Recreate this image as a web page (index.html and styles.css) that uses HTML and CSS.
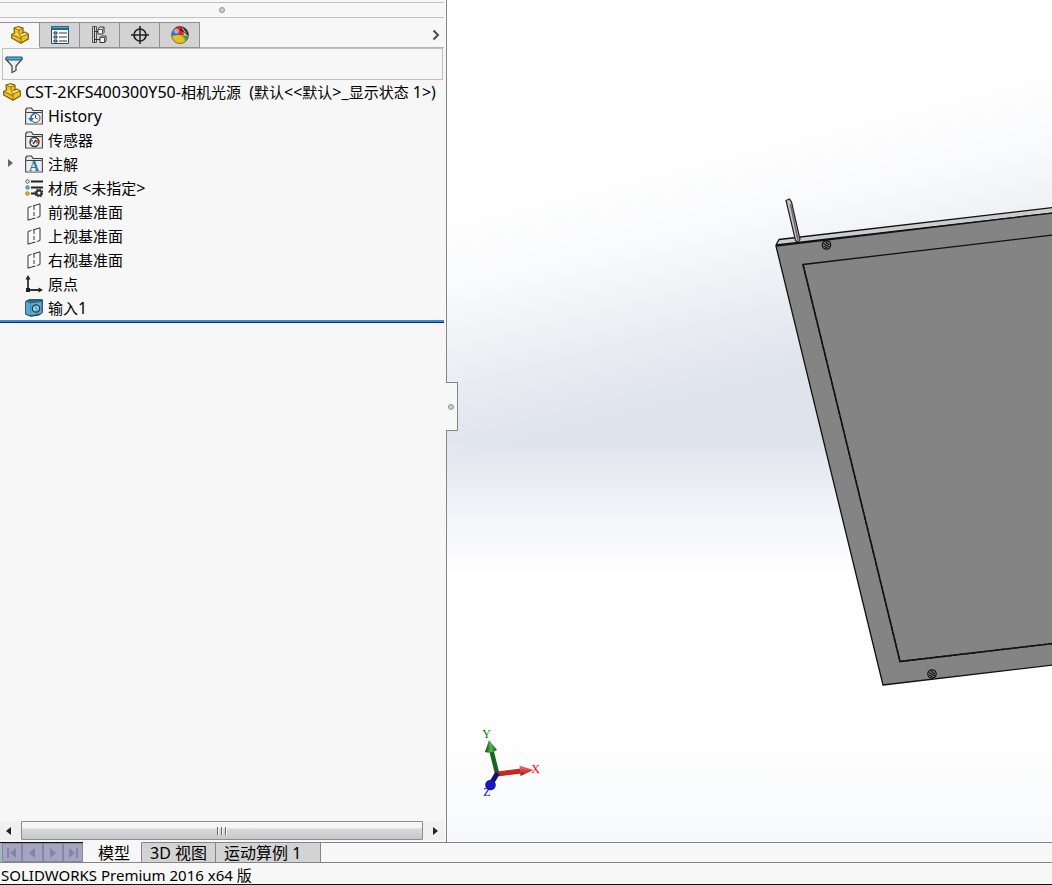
FILE: index.html
```html
<!DOCTYPE html>
<html lang="zh-CN">
<head>
<meta charset="utf-8">
<title>SOLIDWORKS Premium 2016</title>
<link rel="stylesheet" href="styles.css">
</head>
<body>
<svg class="defs" aria-hidden="true">
  <symbol id="part" viewBox="0 0 18 18">
    <path d="M3 2 7 .700 12 2v4.700L14 6l3.300 2v5L10 17.300.700 12V8.500L3.500 7z" fill="#f2c224" stroke="#7d5a08" stroke-width="1.200" stroke-linejoin="round"/>
    <path d="M3.800 2.300 7 1.400l4 1-3 1.300zM1.500 8.700l2.300-1 6 3.300 6.500-3-2-1.200-3 1.400-3-1.400-3 1z" fill="#ffe783"/>
    <path d="M3.500 2.300 8 4v4M8 4l4-1.800M12 6.700 8 8.500l2 2.500 7-3M10 11v6M.700 8.500 10 13" fill="none" stroke="#8a650c" stroke-width=".9"/>
  </symbol>
  <symbol id="folder" viewBox="0 0 18 18">
    <path d="M.7 17V2.500L2 1h4.500L8 3.500h9.300V17z" fill="#e4e6e8" stroke="#404040" stroke-width="1.200"/>
    <path d="M1.300 5.500h15.400" stroke="#404040"/>
    <path d="M1.500 6.300h15v10h-15z" fill="#eceeef"/>
  </symbol>
  <symbol id="plane" viewBox="0 0 18 18">
    <path d="M3 4.500 15 .8v12.700L3 17.200z" fill="#fafafa" stroke="#333"/>
    <path d="M9 3v13" stroke="#333" stroke-dasharray="4 2"/>
    <path d="M6.500 3.400 8 3M10.500 14.900l1.500-.4" stroke="#f7f7f7" stroke-width="2"/>
  </symbol>
</svg>

<main class="workspace">
  <aside class="panel">
    <div class="grip"><span class="dot"></span></div>
    <nav class="tool-tabs" aria-label="管理器">
      <button class="tool is-active" aria-label="特征设计树"><svg class="icon"><use href="#part"/></svg></button>
      <button class="tool" aria-label="属性"><svg class="icon" viewBox="0 0 18 18">
        <path d="M.5.500h17v17H.5z" fill="#fff" stroke="#244b63"/><path d="M0 0h18v4H0z" fill="#26658a"/><path d="M1 1h16v1H1z" fill="#5da7ce"/>
        <path d="M3 6h3v2H3zm0 4h3v2H3zm0 4h3v2H3z" fill="#8cc7e4" stroke="#263f50"/><path d="M8 7h8M8 11h8M8 15h8" stroke="#333"/></svg></button>
      <button class="tool" aria-label="配置"><svg class="icon" viewBox="0 0 18 18">
        <path d="M1.500.500h4v16h-4z" fill="#d9d9d9" stroke="#555"/><path d="M3.500 1v16M4 5.500h4M4 13.500h6" fill="none" stroke="#333"/>
        <path d="M7 3.500 8.500 1H13v5.500L11.500 8H7zM9 11.500l1.500-1.500H15v5l-1.500 1.500H9z" fill="#f1f1f1" stroke="#333"/><path d="M7 3.500h4.500V8m0-4.500L13 1M9 11.500h4.500v5m0-5L15 10" fill="none" stroke="#555"/></svg></button>
      <button class="tool" aria-label="尺寸专家"><svg class="icon" viewBox="0 0 18 18">
        <circle cx="9" cy="9" r="6" fill="none" stroke="#222" stroke-width="1.700"/><path d="M9 0v18M0 9h18" stroke="#222" stroke-width="1.500"/></svg></button>
      <button class="tool" aria-label="外观"><svg class="icon" viewBox="0 0 18 18">
        <path d="M9 9 1 10A8.500 8.500 0 0 1 9 .5z" fill="#2d6fcb"/><path d="M9 10 3.500 2.500Q7-.5 11 .7L13 9z" fill="#e22424"/><path d="M11 .7a8.500 8.500 0 0 1 6.500 9L9 4z" fill="#282020"/><path d="M.6 10 9 9.500 8.500 17.400A8.500 8.500 0 0 1 .6 10z" fill="#e8c40c"/><path d="M8.500 17.500 9 9.500h8.400a8.500 8.500 0 0 1-8.900 8z" fill="#dcc51a"/><path d="M11 9.500h6.500Q17 13 15 15z" fill="#46a03c"/>
        <path d="m11 2 4 5" stroke="#bf8b80" stroke-width="1.500"/><circle cx="5.500" cy="5" r="2.500" fill="#fff" opacity=".5"/><circle cx="9" cy="9" r="8.500" fill="none" stroke="#4d4038" stroke-width=".7"/></svg></button>
      <button class="more" aria-label="更多"><svg width="8" height="12" viewBox="0 0 8 12"><path d="m1.500 1.500 4.500 4.500-4.500 4.500" fill="none" stroke="#4c4c4c" stroke-width="2"/></svg></button>
    </nav>
    <label class="filter">
      <svg class="icon" viewBox="0 0 18 18"><path d="M.8 3 7 10v6.500l4-2V10l6.200-7z" fill="#eee" stroke="#404040" stroke-width="1.200"/><path d="M1 1h16v3H1z" fill="#4cb2df" stroke="#24536d"/></svg>
      <input type="text" aria-label="过滤器">
    </label>
    <ul class="tree">
      <li class="root"><svg class="icon"><use href="#part"/></svg><span><span class="latin">CST-2KFS400300Y50-</span>相机光源<span class="latin">&nbsp; (</span>默认<span class="latin">&lt;&lt;</span>默认<span class="latin">&gt;_</span>显示状态<span class="latin"> 1&gt;)</span></span></li>
      <li><svg class="icon" viewBox="0 0 18 18"><use href="#folder"/><circle cx="10.500" cy="11" r="4.500" fill="#fff" stroke="#444"/><path d="M10.500 8v3l2 1" fill="none" stroke="#444"/><path d="M3 11h6l-3 4z" fill="#267ca7"/><path d="M6.200 12a4.400 4.400 0 0 1 4-5.500" fill="none" stroke="#267ca7" stroke-width="1.600"/></svg><span class="latin">History</span></li>
      <li><svg class="icon" viewBox="0 0 18 18"><use href="#folder"/><circle cx="9.500" cy="11" r="4.500" fill="#fff" stroke="#333" stroke-width="1.400"/><path d="m8 13 3-4" stroke="#333" stroke-width="1.400"/><path d="M11 9h2v3.500h-2z" fill="#dc5338"/><path d="M6 10h2" stroke="#36a2bd" stroke-width="2"/></svg>传感器</li>
      <li><button class="expander" aria-label="展开"></button><svg class="icon" viewBox="0 0 18 18"><use href="#folder"/><text class="note-letter" x="9" y="16" text-anchor="middle">A</text></svg>注解</li>
      <li><svg class="icon" viewBox="0 0 18 18"><path d="M6 2.500h12M6 8.500h12M6 14.500h5" stroke="#222" stroke-width="2"/><circle cx="2.500" cy="2.500" r="1.700" fill="#fff" stroke="#555"/><circle cx="2.500" cy="8.500" r="1.700" fill="#62c0e7" stroke="#287397"/><circle cx="2.500" cy="14.500" r="1.700" fill="#f4c822" stroke="#8f710f"/><circle cx="14" cy="14" r="2.500" fill="none" stroke="#333" stroke-width="2"/><circle cx="14" cy="14" r="3.700" fill="none" stroke="#333" stroke-width="1.500" stroke-dasharray="1.500 1.400"/></svg><span>材质<span class="latin"> &lt;</span>未指定<span class="latin">&gt;</span></span></li>
      <li><svg class="icon"><use href="#plane"/></svg>前视基准面</li>
      <li><svg class="icon"><use href="#plane"/></svg>上视基准面</li>
      <li><svg class="icon"><use href="#plane"/></svg>右视基准面</li>
      <li><svg class="icon" viewBox="0 0 18 18"><path d="M3 3v12h12" fill="none" stroke="#333" stroke-width="1.800"/><path d="M3 0 5.500 4.500h-5zM18 15l-4.500 2.500v-5zM1 13h4v4H1z" fill="#222"/></svg>原点</li>
      <li><svg class="icon" viewBox="0 0 18 18"><path d="M.7 2.500 4 .7h13.300v13L14 16l-8 1.300-5.300-2z" fill="#286d92" stroke="#163e55"/><path d="M1 2.700 5 4v12.500l-4-1.700z" fill="#58a9cb"/><path d="M5.500 4.500 16.500 3v11l-11 2.300z" fill="#68acc9"/><circle cx="11" cy="9.500" r="3.700" fill="#9dd1e4" stroke="#143d56" stroke-width="1.300"/><path d="M9.500 7.500q3 1 2.500 4.500" fill="none" stroke="#35718e"/></svg><span>输入<span class="latin">1</span></span></li>
    </ul>
    <div class="scrollbar">
      <button class="arrow left" aria-label="向左滚动"></button>
      <div class="thumb"><i></i><i></i><i></i></div>
      <button class="arrow right" aria-label="向右滚动"></button>
    </div>
    <button class="splitter" aria-label="折叠面板"><span class="dot"></span></button>
  </aside>

  <section class="viewport" aria-label="图形区域">
    <svg class="scene" viewBox="447 0 605 842" preserveAspectRatio="xMinYMin slice">
      <defs>
        <linearGradient id="red" x2="0" y2="1"><stop stop-color="#ff7770"/><stop offset="1" stop-color="#a50b0b"/></linearGradient>
        <linearGradient id="green"><stop stop-color="#0c450c"/><stop offset=".5" stop-color="#56b956"/><stop offset="1" stop-color="#0c500c"/></linearGradient>
      </defs>
      <g stroke="#111" stroke-width="1.300" stroke-linejoin="round">
        <path d="M776 245 779 239.500 1053 207.500V213z" fill="#ccc"/>
        <path d="M776 246 1053 213V665L883 685z" fill="#848484"/>
        <path d="M1053 235 803 264.500 900 661.500 1053 643.500" fill="#848484"/>
        <path d="m803 264.500 97 397 153-18" fill="none" stroke-width="1.600" stroke-dasharray="5 1"/>
      </g>
      <path d="M786 200.500 789.500 199 791.500 202 800 239.500Q798 243 795.500 240.500z" fill="#c4bfc5" stroke="#222" stroke-width="1.200"/>
      <path d="m790.500 204 7.500 36" stroke="#75607a" stroke-width="1.500"/>
      <g fill="#888" stroke="#111" stroke-width="1.200">
        <circle cx="826.500" cy="245" r="4.200"/><path d="m823.500 243.500 6 3.500m-4-5 4 3m-6 1 4 2"/>
        <circle cx="932" cy="674" r="4.200"/><path d="m929 672.500 6 3.500m-4-5 4 3m-6 1 4 2"/>
      </g>
      <path d="M497 773 491.500 751" stroke="#17651b" stroke-width="4.500"/>
      <path d="m489 740-4 12q6 2 12-2z" fill="url(#green)"/>
      <path d="m497 772 24-3 .5 4-24.500 3z" fill="#d42222" stroke="#9d1717" stroke-width=".8"/>
      <path d="m519.500 765.500 14 4.500-13 6z" fill="url(#red)"/>
      <path d="m497.500 773-6 10" stroke="#111174" stroke-width="5"/>
      <circle cx="490.500" cy="785" r="5.300" fill="#1919b5"/>
      <g class="axis-label" text-anchor="middle"><text x="486.500" y="738" fill="#008000">Y</text><text x="535.500" y="773" fill="#f00">X</text><text x="487" y="796" fill="#00f">Z</text></g>
    </svg>
  </section>
</main>

<nav class="sheet-tabs" aria-label="视图">
  <div class="sheet-nav">
    <button aria-label="第一个"><svg viewBox="0 0 12 12"><path d="M1 1h2v10H1zM10 1v10L4 6z"/></svg></button>
    <button aria-label="上一个"><svg viewBox="0 0 12 12"><path d="M9 1v10L3 6z"/></svg></button>
    <button aria-label="下一个"><svg viewBox="0 0 12 12"><path d="M3 1v10l6-5z"/></svg></button>
    <button aria-label="最后一个"><svg viewBox="0 0 12 12"><path d="M2 1v10l6-5zM9 1h2v10H9z"/></svg></button>
  </div>
  <button class="sheet is-active">模型</button>
  <button class="sheet">3D 视图</button>
  <button class="sheet wide">运动算例 1</button>
  <span class="sheet-rest"></span>
</nav>
<footer class="status">SOLIDWORKS Premium 2016 x64 版</footer>
</body>
</html>
```
FILE: styles.css
```css
* { box-sizing: border-box; }

body {
  margin: 0;
  min-height: 100vh;
  display: flex;
  flex-direction: column;
  background: #f7f7f7;
  color: #000;
  font: 15px/24px "Noto Sans", "Noto Sans CJK SC", sans-serif;
}

button {
  margin: 0;
  padding: 0;
  border: 0;
  background: none;
  color: inherit;
  font: inherit;
}

.defs { position: absolute; width: 0; height: 0; }
.icon { width: 18px; height: 18px; flex: none; display: block; }
.latin { font-size: 16px; white-space: pre; }

.workspace {
  flex: 1;
  display: grid;
  grid-template-columns: 446px minmax(0, 1fr);
}

.panel {
  position: relative;
  display: flex;
  flex-direction: column;
  padding-top: 2px;
}

.grip {
  height: 16px;
  margin-right: 2px;
  display: flex;
  align-items: center;
  justify-content: center;
  border-top: 1px solid #c0c0c0;
  border-bottom: 1px solid #c0c0c0;
}

.dot {
  width: 6px;
  height: 6px;
  border: 1px solid #929292;
  border-radius: 50%;
  background: #cfcfcf;
}

.tool-tabs {
  display: flex;
  height: 26px;
  margin: 4px 2px 0 0;
}

.tool {
  width: 40px;
  display: flex;
  align-items: center;
  justify-content: center;
  border: 1px solid #909090;
  border-left: 0;
  background: #d3d3d3;
}

.tool.is-active { background: #f7f7f7; border-bottom-color: #f7f7f7; }

.more {
  flex: 1;
  display: flex;
  align-items: center;
  justify-content: flex-end;
  padding-right: 4px;
  border-bottom: 1px solid #b5b5b5;
}

.filter {
  display: flex;
  align-items: center;
  height: 32px;
  margin: 0 1px 0 2px;
  padding: 2px 0 0 2px;
  border: 1px solid #c0c0c0;
  margin-right: 3px;
}

.filter input {
  flex: 1;
  min-width: 0;
  border: 0;
  outline: 0;
  background: none;
  font: inherit;
}

.tree {
  margin: 0 2px 0 0;
  padding: 0 0 2px;
  list-style: none;
  border-bottom: 1px solid #1b1b9c;
  box-shadow: inset 0 -2px #3a8cc8;
}

.tree li {
  position: relative;
  display: flex;
  align-items: center;
  gap: 5px;
  height: 24px;
  padding-left: 25px;
  white-space: nowrap;
}

.tree .root { padding-left: 3px; gap: 4px; }
.note-letter { font: bold 14px "Liberation Serif", serif; fill: #287b9e; }

.expander {
  position: absolute;
  left: 8px;
  top: 7px;
  border: 4px solid transparent;
  border-left: 5px solid #666;
  border-right: 0;
}

.scrollbar {
  display: flex;
  height: 19px;
  margin: auto 2px 2px 0;
  background: #f0f0f0;
}

.arrow {
  width: 21px;
  padding-right: 4px;
  display: flex;
  align-items: center;
  justify-content: center;
}

.arrow.right { padding: 0 0 0 4px; }
.arrow::before { content: ""; border: 4px solid transparent; }
.arrow.left::before { border-right: 5px solid #222; border-left: 0; }
.arrow.right::before { border-left: 5px solid #222; border-right: 0; }

.thumb {
  flex: 1;
  display: flex;
  align-items: center;
  justify-content: center;
  gap: 2px;
  border: 1px solid #8c8c8c;
  border-radius: 1px;
  background: linear-gradient(#f5f5f5 0 35%, #dadadc 40%, #c6c6cc);
}

.thumb i { width: 2px; height: 8px; background: linear-gradient(90deg, #666 50%, #fff 50%); }

.splitter {
  position: absolute;
  z-index: 1;
  left: 446px;
  top: 382px;
  width: 12px;
  height: 49px;
  display: flex;
  align-items: center;
  justify-content: center;
  padding-right: 2px;
  border: 1px solid #858585;
  border-left: 0;
  background: #f7f7f7;
}

.viewport {
  position: relative;
  overflow: hidden;
  border-left: 1px solid #858585;
  background:
    linear-gradient(166deg, #fff 190px, rgba(255, 255, 255, 0.85) 280px, rgba(255, 255, 255, 0.3) 380px, rgba(255, 255, 255, 0) 450px),
    linear-gradient(#dfe3ec 440px, #f4f5f9 515px, #fff 580px, #fff 720px, #f8f9fb);
}

.scene { position: absolute; inset: 0; width: 100%; height: 100%; }
.axis-label { font: 12px "Liberation Serif", serif; }

.sheet-tabs { display: flex; height: 20px; font-size: 16px; line-height: 20px; }

.sheet-nav {
  display: flex;
  width: 83px;
  padding-left: 2px;
  border-top: 1px solid #111;
  background: #a4b8ba;
}

.sheet-nav button {
  flex: 1;
  display: flex;
  align-items: center;
  justify-content: center;
  border: 1px solid #8787a5;
  background: #a5a5bf;
}

.sheet-nav svg { width: 12px; height: 12px; fill: #8585a3; }

.sheet {
  padding: 0 8px;
  border-top: 1px solid #858585;
  border-right: 1px solid #858585;
  background: #d3d3d3;
  line-height: 18px;
  white-space: nowrap;
}

.sheet.is-active { padding: 0 11px 0 15px; border-top-color: #f7f7f7; background: #f7f7f7; }
.sheet.wide { padding-right: 19px; }
.sheet-rest { flex: 1; border-top: 1px solid #858585; }

.status {
  height: 23px;
  padding-left: 1px;
  border-top: 1px solid #858585;
  border-bottom: 1px solid #111;
  line-height: 24px;
  white-space: nowrap;
}
```
